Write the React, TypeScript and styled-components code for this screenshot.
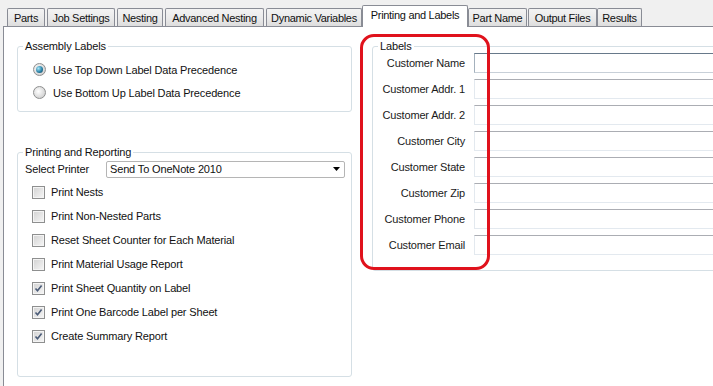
import React from "react";
import styled, { createGlobalStyle } from "styled-components";

const GlobalStyle = createGlobalStyle`
  html, body {
    margin: 0;
    padding: 0;
    background: #f0f0f0;
    overflow: hidden;
  }
  body {
    font-family: "Liberation Sans", Arial, sans-serif;
    font-size: 11px;
    letter-spacing: -0.15px;
    color: #111;
  }
`;

const Window = styled.div`
  position: relative;
  width: 713px;
  height: 386px;
  overflow: hidden;
  background: #f0f0f0;
`;

const TabStrip = styled.div`
  position: relative;
  z-index: 2;
  display: flex;
  align-items: flex-end;
  height: 26px;
  padding-left: 7px;
`;

const Tab = styled.div<{ $w: number; $ml: number; $active?: boolean }>`
  box-sizing: border-box;
  width: ${({ $w }) => $w}px;
  margin-left: ${({ $ml }) => $ml}px;
  height: ${({ $active }) => ($active ? 22 : 18)}px;
  margin-bottom: ${({ $active }) => ($active ? -1 : 0)}px;
  display: flex;
  align-items: center;
  justify-content: center;
  padding-bottom: ${({ $active }) => ($active ? 3 : 0)}px;
  border: 1px solid #898c95;
  border-bottom: none;
  border-radius: 2px 2px 0 0;
  background: ${({ $active }) =>
    $active ? "#fff" : "linear-gradient(#f3f3f3, #ebebeb 50%, #dddddd)"};
  white-space: nowrap;
  letter-spacing: -0.3px;
`;

const Page = styled.div`
  box-sizing: border-box;
  margin-left: 3px;
  margin-right: -2px;
  height: 360px;
  background: #fff;
  border: 1px solid #898c95;
  border-bottom: none;
  overflow: hidden;
  display: grid;
  grid-template-columns: 335px 400px;
  column-gap: 20px;
  align-items: start;
  padding: 13px 0 0 13px;
`;

const Column = styled.div`
  display: flex;
  flex-direction: column;
`;

const Group = styled.fieldset<{ $pad: string; $mt?: number }>`
  margin: ${({ $mt }) => $mt ?? 0}px 0 0 0;
  padding: ${({ $pad }) => $pad};
  border: 1px solid #d5dfe5;
  border-radius: 3px;
  min-width: 0;
`;

const Legend = styled.legend`
  padding: 0 2px;
  line-height: 13px;
  font-size: 11px;
`;

const OptionRow = styled.div<{ $h: number; $indent: number }>`
  display: flex;
  align-items: center;
  height: ${({ $h }) => $h}px;
  padding-left: ${({ $indent }) => $indent}px;
`;

const Radio = styled.span<{ $on?: boolean }>`
  box-sizing: border-box;
  width: 13px;
  height: 13px;
  margin-right: 7px;
  border-radius: 50%;
  border: 1px solid #8e8f8f;
  background: radial-gradient(circle at 40% 40%, #ffffff, #cfcfcf 80%);
  display: flex;
  align-items: center;
  justify-content: center;

  &::after {
    content: "";
    display: ${({ $on }) => ($on ? "block" : "none")};
    width: 7px;
    height: 7px;
    border-radius: 50%;
    background: radial-gradient(circle at 35% 35%, #a8e6f8, #2b83a8 55%, #0e3a52);
  }
`;

const Box = styled.span`
  box-sizing: border-box;
  width: 13px;
  height: 13px;
  margin-right: 6px;
  border: 1px solid #8e8f8f;
  background: linear-gradient(135deg, #d2d2d2, #f6f6f6);
  box-shadow: inset 0 0 0 1px #f4f4f4;
  display: flex;
  align-items: center;
  justify-content: center;
`;

const PrinterRow = styled.div`
  display: flex;
  align-items: center;
  height: 18px;
  padding-left: 2px;
`;

const PrinterLabel = styled.span`
  width: 81px;
`;

const Select = styled.div`
  box-sizing: border-box;
  width: 239px;
  height: 17px;
  border: 1px solid #b5b5b5;
  border-radius: 2px;
  background: #fff;
  display: flex;
  align-items: center;
  justify-content: space-between;
  padding: 0 4px 0 3px;
`;

const CheckList = styled.div`
  margin-top: 2px;
  display: flex;
  flex-direction: column;
`;

const FieldGrid = styled.div`
  display: grid;
  grid-template-columns: 87px 300px;
  column-gap: 9px;
  row-gap: 6px;
  align-items: center;
`;

const FieldLabel = styled.span`
  text-align: right;
  white-space: nowrap;
  color: #1a1a1a;
`;

const TextBox = styled.div<{ $focus?: boolean }>`
  box-sizing: border-box;
  height: 20px;
  background: #fff;
  border: 1px solid ${({ $focus }) => ($focus ? "#a4b1bd" : "#e3e9ef")};
  border-top-color: ${({ $focus }) => ($focus ? "#67798a" : "#abadb3")};
  border-bottom-color: ${({ $focus }) => ($focus ? "#c8d0d8" : "#e3e9ef")};
`;

const Annotation = styled.div`
  position: absolute;
  left: 360px;
  top: 34px;
  width: 130px;
  height: 236px;
  box-sizing: border-box;
  border: 3px solid #e0121c;
  border-radius: 14px;
  pointer-events: none;
  z-index: 3;
`;

const tabs = [
  { label: "Parts", w: 38, ml: 0 },
  { label: "Job Settings", w: 68, ml: 2 },
  { label: "Nesting", w: 46, ml: 2 },
  { label: "Advanced Nesting", w: 99, ml: 2 },
  { label: "Dynamic Variables", w: 96, ml: 2 },
  { label: "Printing and Labels", w: 106, ml: 0, active: true },
  { label: "Part Name", w: 59, ml: 0 },
  { label: "Output Files", w: 69, ml: 1 },
  { label: "Results", w: 45, ml: 0 },
];

const checks = [
  { label: "Print Nests", on: false },
  { label: "Print Non-Nested Parts", on: false },
  { label: "Reset Sheet Counter for Each Material", on: false },
  { label: "Print Material Usage Report", on: false },
  { label: "Print Sheet Quantity on Label", on: true },
  { label: "Print One Barcode Label per Sheet", on: true },
  { label: "Create Summary Report", on: true },
];

const fields = [
  "Customer Name",
  "Customer Addr. 1",
  "Customer Addr. 2",
  "Customer City",
  "Customer State",
  "Customer Zip",
  "Customer Phone",
  "Customer Email",
];

const Check = () => (
  <svg width="9" height="9" viewBox="0 0 9 9">
    <path d="M1.5 4.5 L3.5 6.8 L7.6 1.5" fill="none" stroke="#4b5c78" strokeWidth="1.6" />
  </svg>
);

const App: React.FC = () => {
  return (
    <Window>
      <GlobalStyle />
      <TabStrip>
        {tabs.map((t) => (
          <Tab key={t.label} $w={t.w} $ml={t.ml} $active={t.active}>
            {t.label}
          </Tab>
        ))}
      </TabStrip>
      <Page>
        <Column>
          <Group $pad="5px 5px 7px 5px">
            <Legend>Assembly Labels</Legend>
            <OptionRow $h={23} $indent={10}>
              <Radio $on />
              Use Top Down Label Data Precedence
            </OptionRow>
            <OptionRow $h={23} $indent={10}>
              <Radio />
              Use Bottom Up Label Data Precedence
            </OptionRow>
          </Group>
          <Group $pad="1px 5px 28px 5px" $mt={34}>
            <Legend>Printing and Reporting</Legend>
            <PrinterRow>
              <PrinterLabel>Select Printer</PrinterLabel>
              <Select>
                <span>Send To OneNote 2010</span>
                <svg width="7" height="4" viewBox="0 0 7 4">
                  <polygon points="0,0 7,0 3.5,4" fill="#000" />
                </svg>
              </Select>
            </PrinterRow>
            <CheckList>
              {checks.map((c) => (
                <OptionRow key={c.label} $h={24} $indent={9}>
                  <Box>{c.on && <Check />}</Box>
                  {c.label}
                </OptionRow>
              ))}
            </CheckList>
          </Group>
        </Column>
        <Group $pad="0 0 15px 5px">
          <Legend>Labels</Legend>
          <FieldGrid>
            {fields.map((f, i) => (
              <React.Fragment key={f}>
                <FieldLabel>{f}</FieldLabel>
                <TextBox $focus={i === 0} />
              </React.Fragment>
            ))}
          </FieldGrid>
        </Group>
      </Page>
      <Annotation />
    </Window>
  );
};

export default App;
